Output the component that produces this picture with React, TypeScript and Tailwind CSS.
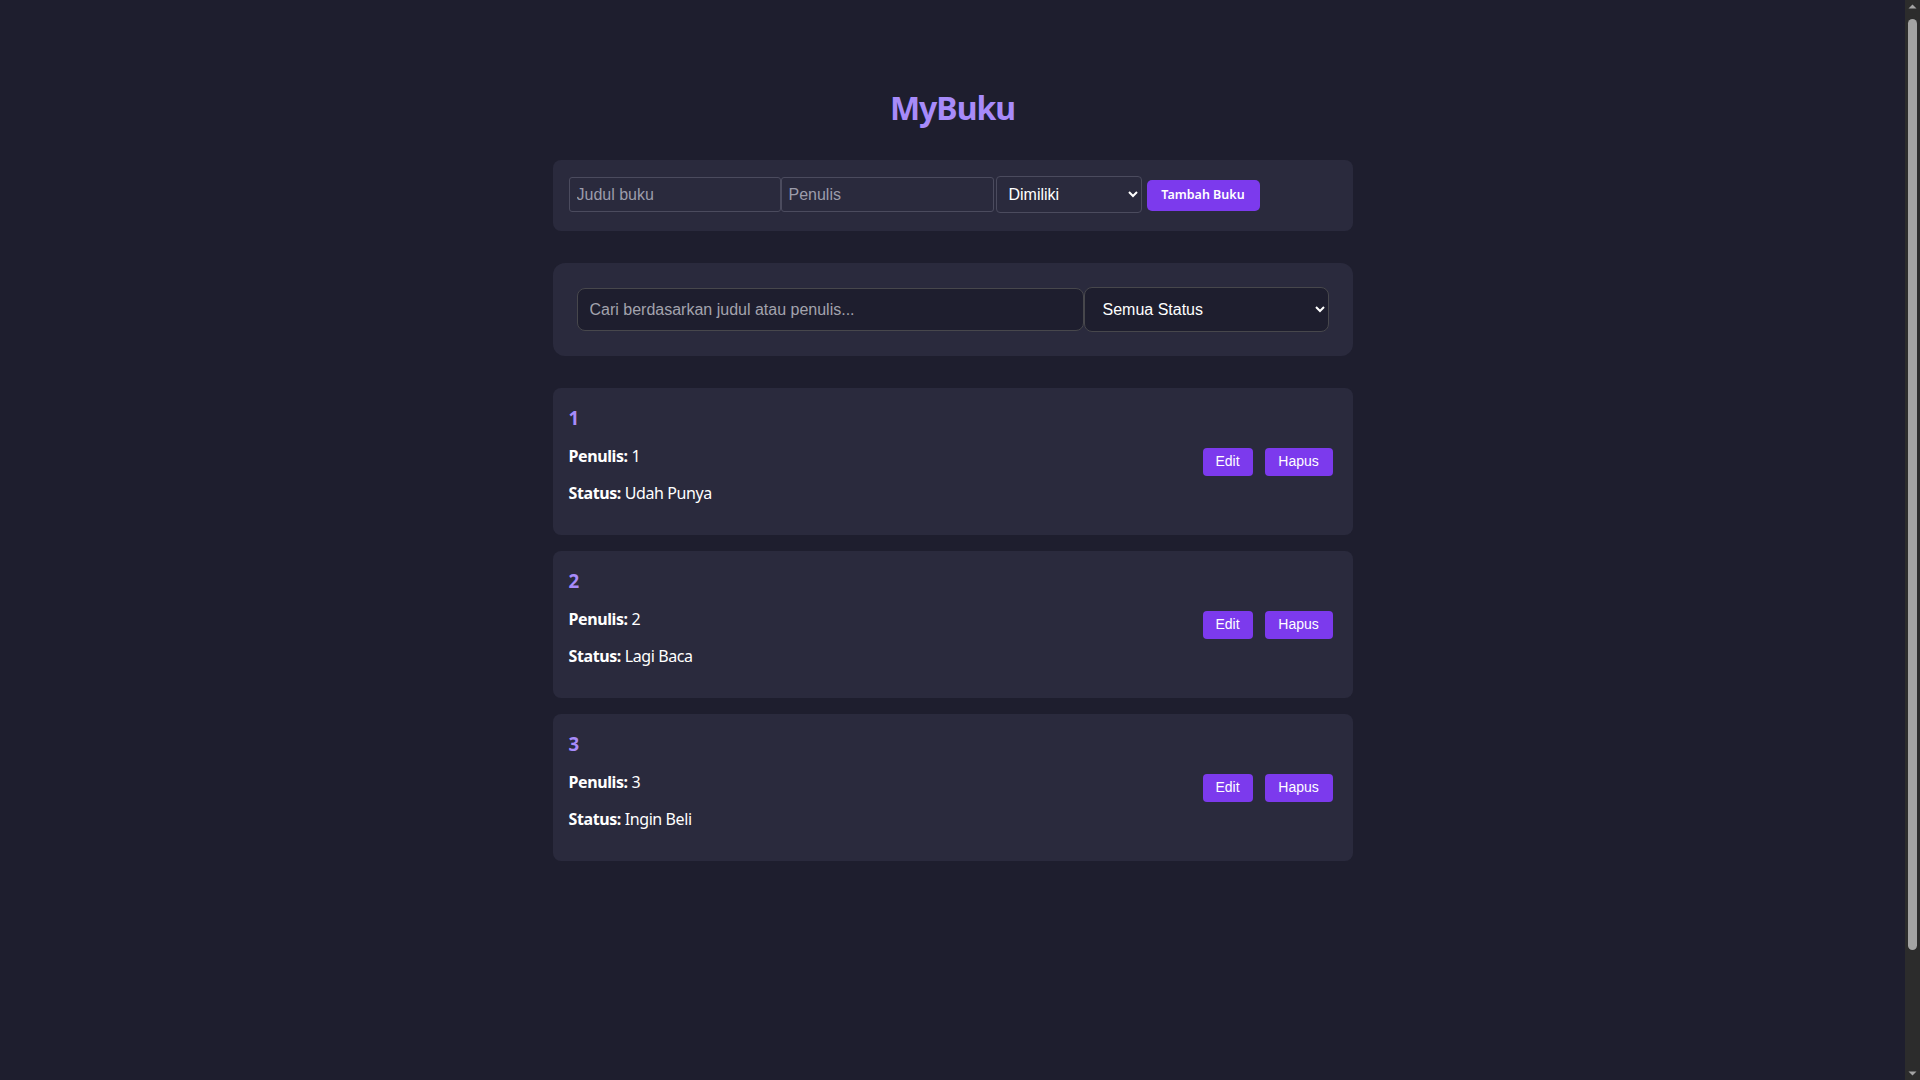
import React from "react";

const books = [
  { title: "1", author: "1", status: "Udah Punya" },
  { title: "2", author: "2", status: "Lagi Baca" },
  { title: "3", author: "3", status: "Ingin Beli" },
];

function FakeScrollbar() {
  return (
    <div className="flex h-screen w-[15px] shrink-0 flex-col items-center bg-[#2c2c2c]">
      <svg width="15" height="15" viewBox="0 0 15 15" className="shrink-0">
        <path d="M3.5 8.5 L7.5 4.5 L11.5 8.5 Z" fill="#a3a3a3" />
      </svg>
      <div className="mt-[4px] h-[931px] w-[9px] rounded-full bg-[#a3a3a3]" />
      <div className="flex-1" />
      <svg width="15" height="15" viewBox="0 0 15 15" className="shrink-0">
        <path d="M3.5 6.5 L7.5 10.5 L11.5 6.5 Z" fill="#a3a3a3" />
      </svg>
    </div>
  );
}

export default function App() {
  return (
    <div className="flex h-screen overflow-hidden bg-[#1e1e2e] font-['Noto_Sans',sans-serif] text-white">
      <div className="flex-1 pt-[88px]">
        <div className="mx-auto w-[800px]">
          <h1 className="h-[40px] text-center text-[32px] leading-[40px] font-bold tracking-[-1px] text-[#a78bfa]">
            MyBuku
          </h1>

          <div className="mt-[32px] rounded-lg bg-[#2a2a3d] pt-4 pb-[18px] pl-4">
            <div className="flex items-center font-['Liberation_Sans',Arial,sans-serif]">
              <input
                className="h-[35px] w-[212px] rounded-[3px] border border-[#4b4b5e] bg-transparent pl-[7px] text-[16px] text-white placeholder:text-[#9c9cab] outline-none"
                placeholder="Judul buku"
              />
              <input
                className="h-[35px] w-[213px] rounded-[3px] border border-[#4b4b5e] bg-transparent pl-[7px] text-[16px] text-white placeholder:text-[#9c9cab] outline-none"
                placeholder="Penulis"
              />
              <select className="ml-[2px] h-[37px] w-[146px] rounded-[4px] border border-[#4b4b5e] bg-[#2a2a3d] px-2 text-[16px] text-white outline-none">
                <option>Dimiliki</option>
                <option>Lagi Baca</option>
                <option>Ingin Beli</option>
              </select>
              <button className="ml-[5px] mt-[2px] h-[31px] w-[113px] rounded-[5px] bg-[#7c3aed] font-['Noto_Sans',sans-serif] text-[12.5px] font-semibold text-white">
                Tambah Buku
              </button>
            </div>
          </div>

          <div className="mt-8 rounded-xl bg-[#2a2a3d] p-6">
            <div className="flex items-center font-['Liberation_Sans',Arial,sans-serif]">
              <input
                className="h-[43px] flex-1 rounded-lg border border-[#47474c] bg-[#1e1e2e] px-3 text-[16px] text-white placeholder:text-[#a3a3ad] outline-none"
                placeholder="Cari berdasarkan judul atau penulis..."
              />
              <select className="h-[45px] w-[245px] rounded-lg border border-[#47474c] bg-[#1e1e2e] pl-[14px] pr-[6px] text-[16px] text-white outline-none">
                <option>Semua Status</option>
                <option>Udah Punya</option>
                <option>Lagi Baca</option>
                <option>Ingin Beli</option>
              </select>
            </div>
          </div>

          <div className="mt-8 flex flex-col gap-4">
            {books.map((b) => (
              <div
                key={b.title}
                className="flex h-[147px] items-center justify-between rounded-lg bg-[#2a2a3d] pl-4 pr-[20px]"
              >
                <div className="flex h-full flex-col pt-[17px] tracking-[-0.4px]">
                  <h3 className="h-[25px] text-[18.72px] leading-[25px] font-bold text-[#a78bfa]">
                    {b.title}
                  </h3>
                  <p className="mt-4 h-[21px] text-[16px] leading-[21px]">
                    <span className="font-bold">Penulis:</span> {b.author}
                  </p>
                  <p className="mt-4 h-[21px] text-[16px] leading-[21px]">
                    <span className="font-bold">Status:</span> {b.status}
                  </p>
                </div>
                <div className="flex items-center gap-3 font-['Liberation_Sans',Arial,sans-serif]">
                  <button className="h-[28px] w-[50px] rounded-[4px] bg-[#7c3aed] text-[14px] text-white">
                    Edit
                  </button>
                  <button className="h-[28px] w-[68px] rounded-[4px] bg-[#7c3aed] text-[14px] text-white">
                    Hapus
                  </button>
                </div>
              </div>
            ))}
          </div>
        </div>
      </div>
      <FakeScrollbar />
    </div>
  );
}
